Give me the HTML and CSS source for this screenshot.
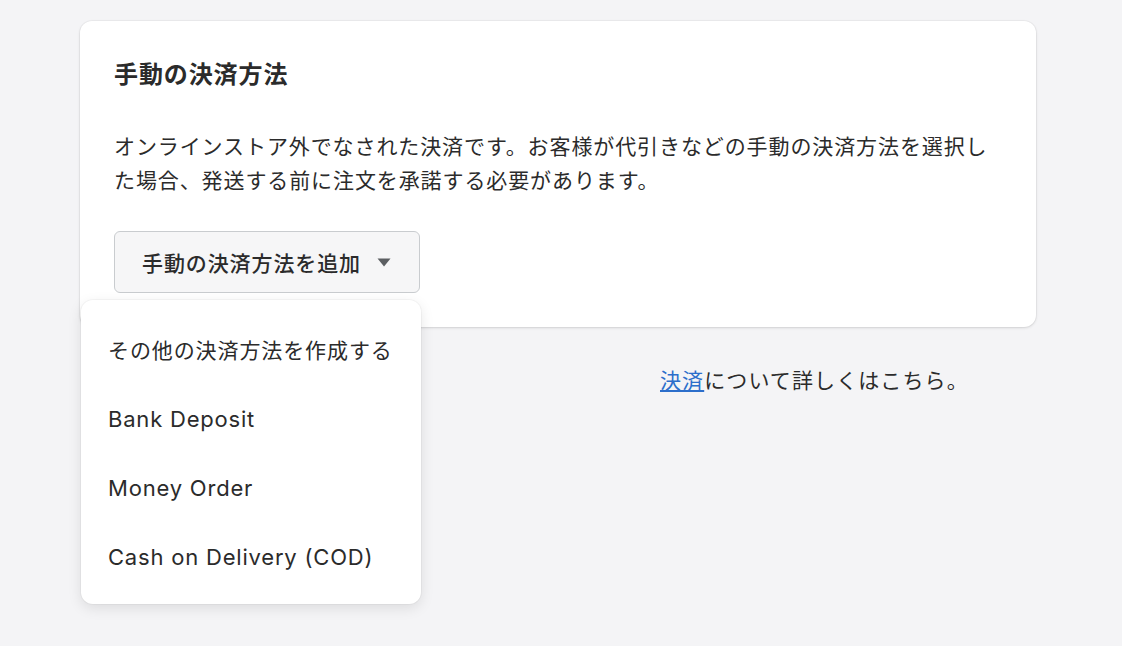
FILE: index.html
```html
<!DOCTYPE html>
<html lang="ja">
<head>
  <meta charset="UTF-8">
  <title>手動の決済方法</title>
  <link rel="stylesheet" href="styles.css">
</head>
<body>
  <div class="page">
    <div class="card">
      <h2 class="card-title">手動の決済方法</h2>
      <p class="card-text">オンラインストア外でなされた決済です。お客様が代引きなどの手動の決済方法を選択した場合、発送する前に注文を承諾する必要があります。</p>
      <div class="add-wrap">
        <button class="add-button">
          <span>手動の決済方法を追加</span>
          <svg class="caret" width="14" height="9" viewBox="0 0 14 9"><path d="M0.5 0.5h13L7 8.5z" fill="#5c5f62"/></svg>
        </button>
        <ul class="menu">
          <li class="menu-item ja">その他の決済方法を作成する</li>
          <li class="menu-item">Bank Deposit</li>
          <li class="menu-item">Money Order</li>
          <li class="menu-item">Cash on Delivery (COD)</li>
        </ul>
      </div>
    </div>
    <p class="footer-help"><a href="#">決済</a>について詳しくはこちら。</p>
  </div>
</body>
</html>
```

FILE: styles.css
```css
html, body {
  height: 100%;
}
body {
  margin: 0;
  background-color: #f4f4f6;
  color: #2b2b2b;
  font-family: Inter, "Noto Sans CJK JP", sans-serif;
}
.page {
  min-height: 100%;
  box-sizing: border-box;
  padding: 21px 86px 0 80px;
}
.card {
  background-color: #fff;
  border-radius: 12px;
  box-shadow: 0 1px 3px rgba(0,0,0,0.12), 0 0 0 1px rgba(0,0,0,0.03);
  padding: 38px 34px 34px 34px;
}
.card-title {
  margin: 0;
  font-size: 24px;
  line-height: 32px;
  font-weight: 600;
  letter-spacing: 0.9px;
}
.card-text {
  margin: 39px 0 0;
  font-size: 21px;
  line-height: 34px;
  letter-spacing: 0.9px;
}
.add-wrap {
  position: relative;
  margin-top: 33px;
  width: 306px;
}
.add-button {
  display: flex;
  align-items: center;
  justify-content: space-between;
  width: 306px;
  height: 62px;
  padding: 0 28px 0 27px;
  background-color: #f6f6f7;
  border: 1px solid #c9cccf;
  border-radius: 6px;
  font-family: inherit;
  font-size: 21px;
  font-weight: 500;
  letter-spacing: 0.9px;
  color: #2b2b2b;
  box-sizing: border-box;
}
.caret {
  display: block;
}
.menu {
  position: absolute;
  top: 69px;
  left: -33px;
  width: 340px;
  margin: 0;
  padding: 16px 0 12px;
  list-style: none;
  background-color: #fff;
  border-radius: 12px;
  box-shadow: 0 4px 14px rgba(0,0,0,0.1), 0 0 0 1px rgba(0,0,0,0.03);
  z-index: 2;
}
.menu-item {
  height: 69px;
  line-height: 69px;
  padding-left: 27px;
  font-size: 22px;
  letter-spacing: 0.8px;
}
.menu-item.ja {
  font-size: 21px;
  letter-spacing: 0.9px;
}
.footer-help {
  margin: 37px 0 0;
  padding-left: 580px;
  font-size: 21px;
  line-height: 34px;
  letter-spacing: 1.1px;
}
.footer-help a {
  color: #2c6ecb;
  text-decoration: underline;
}
```
